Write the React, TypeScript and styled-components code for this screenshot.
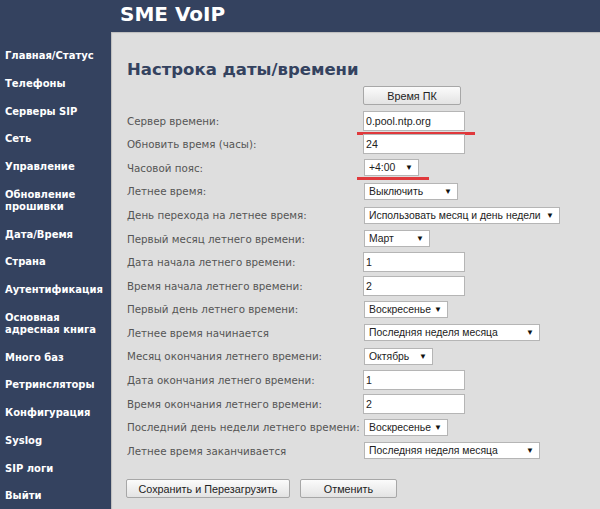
import React from 'react';
import styled, { createGlobalStyle } from 'styled-components';

const GlobalStyle = createGlobalStyle`
  html, body {
    margin: 0;
    padding: 0;
    background: #34425f;
  }
`;

const menu: string[][] = [
  ['Главная/Статус'],
  ['Телефоны'],
  ['Серверы SIP'],
  ['Сеть'],
  ['Управление'],
  ['Обновление', 'прошивки'],
  ['Дата/Время'],
  ['Страна'],
  ['Аутентификация'],
  ['Основная', 'адресная книга'],
  ['Много баз'],
  ['Ретринсляторы'],
  ['Конфигурация'],
  ['Syslog'],
  ['SIP логи'],
  ['Выйти'],
];

type Field =
  | { kind: 'input'; label: string; value: string; mark?: boolean }
  | { kind: 'select'; label: string; value: string; width: number; mark?: boolean };

const fields: Field[] = [
  { kind: 'input', label: 'Сервер времени:', value: '0.pool.ntp.org', mark: true },
  { kind: 'input', label: 'Обновить время (часы):', value: '24' },
  { kind: 'select', label: 'Часовой пояс:', value: '+4:00', width: 55, mark: true },
  { kind: 'select', label: 'Летнее время:', value: 'Выключить', width: 94 },
  { kind: 'select', label: 'День перехода на летнее время:', value: 'Использовать месяц и день недели', width: 196 },
  { kind: 'select', label: 'Первый месяц летнего времени:', value: 'Март', width: 66 },
  { kind: 'input', label: 'Дата начала летнего времени:', value: '1' },
  { kind: 'input', label: 'Время начала летнего времени:', value: '2' },
  { kind: 'select', label: 'Первый день летнего времени:', value: 'Воскресенье', width: 84 },
  { kind: 'select', label: 'Летнее время начинается', value: 'Последняя неделя месяца', width: 176 },
  { kind: 'select', label: 'Месяц окончания летнего времени:', value: 'Октябрь', width: 69 },
  { kind: 'input', label: 'Дата окончания летнего времени:', value: '1' },
  { kind: 'input', label: 'Время окончания летнего времени:', value: '2' },
  { kind: 'select', label: 'Последний день недели летнего времени:', value: 'Воскресенье', width: 84 },
  { kind: 'select', label: 'Летнее время заканчивается', value: 'Последняя неделя месяца', width: 176 },
];

const App = () => (
  <Page>
    <GlobalStyle />
    <Header>SME VoIP</Header>
    <Sidebar>
      {menu.map((lines) => (
        <MenuItem key={lines.join(' ')}>
          {lines.map((l) => (
            <div key={l}>{l}</div>
          ))}
        </MenuItem>
      ))}
    </Sidebar>
    <Content>
      <Title>Настрока даты/времени</Title>
      <Form>
        <span />
        <Cell>
          <Button $width={98}>Время ПК</Button>
        </Cell>
        {fields.map((f) => (
          <React.Fragment key={f.label}>
            <Label>{f.label}</Label>
            <Cell>
              <Marked>
                {f.kind === 'input' ? (
                  <Input defaultValue={f.value} />
                ) : (
                  <Select $width={f.width}>
                    <span>{f.value}</span>
                    <Arrow>▼</Arrow>
                  </Select>
                )}
                {f.mark && <Underline />}
              </Marked>
            </Cell>
          </React.Fragment>
        ))}
      </Form>
      <Actions>
        <Button $width={164}>Сохранить и Перезагрузить</Button>
        <Button $width={97}>Отменить</Button>
      </Actions>
    </Content>
  </Page>
);

const Page = styled.div`
  display: grid;
  grid-template-columns: 111px 1fr;
  grid-template-rows: 32px 1fr;
  min-height: 509px;
  background: #34425f;
`;

const Header = styled.div`
  grid-column: 1 / -1;
  padding-left: 120px;
  font-family: 'DejaVu Sans', Verdana, sans-serif;
  font-weight: bold;
  font-size: 20px;
  line-height: 28px;
  color: #ffffff;
`;

const Sidebar = styled.nav`
  display: flex;
  flex-direction: column;
  gap: 15.75px;
  padding: 18px 0 0 5px;
`;

const MenuItem = styled.div`
  font-family: 'DejaVu Sans', Verdana, sans-serif;
  font-weight: bold;
  font-size: 10px;
  line-height: 12px;
  color: #ffffff;
`;

const Content = styled.main`
  background: #dedede;
  box-shadow: inset 1px 1px 1px rgba(0, 0, 0, 0.15);
  padding: 26px 0 0 16px;
`;

const Title = styled.h1`
  margin: 0;
  font-family: 'DejaVu Sans', Verdana, sans-serif;
  font-weight: bold;
  font-size: 16.5px;
  line-height: 24px;
  color: #34425f;
`;

const Form = styled.div`
  display: grid;
  grid-template-columns: 236px auto;
  grid-template-rows: 27px;
  grid-auto-rows: 23.57px;
  align-items: center;
`;

const Label = styled.div`
  font-family: 'DejaVu Sans', Verdana, sans-serif;
  font-size: 10.3px;
  color: #555555;
  white-space: nowrap;
`;

const Cell = styled.div`
  display: flex;
  align-items: center;
`;

const Marked = styled.div`
  position: relative;
  display: flex;
`;

const Underline = styled.span`
  position: absolute;
  left: -6px;
  right: -10px;
  bottom: -4px;
  height: 3px;
  background: #e0393c;
`;

const Input = styled.input`
  box-sizing: border-box;
  width: 102px;
  height: 20px;
  margin: 0;
  padding: 0 2px;
  border: 1px solid #b5b5b5;
  background: #ffffff;
  font-family: 'Liberation Sans', Arial, sans-serif;
  font-size: 10.6px;
  color: #222222;
  outline: none;
`;

const Select = styled.div<{ $width: number }>`
  box-sizing: border-box;
  display: flex;
  align-items: center;
  justify-content: space-between;
  width: ${(p) => p.$width}px;
  height: 17px;
  margin-left: 1px;
  padding: 0 5px 0 4px;
  border: 1px solid #b5b5b5;
  background: #ffffff;
  font-family: 'Liberation Sans', Arial, sans-serif;
  font-size: 10.4px;
  color: #222222;
  white-space: nowrap;
`;

const Arrow = styled.span`
  font-size: 8px;
  color: #111111;
`;

const Button = styled.button<{ $width: number }>`
  box-sizing: border-box;
  width: ${(p) => p.$width}px;
  height: 19px;
  margin: 0;
  padding: 0;
  border: 1px solid #a7a7a7;
  border-radius: 2px;
  background: linear-gradient(#fbfbfb, #e3e3e3);
  font-family: 'Liberation Sans', Arial, sans-serif;
  font-size: 10.8px;
  color: #222222;
`;

const Actions = styled.div`
  display: flex;
  gap: 10px;
  margin: 17px 0 0 -1px;
`;

export default App;
